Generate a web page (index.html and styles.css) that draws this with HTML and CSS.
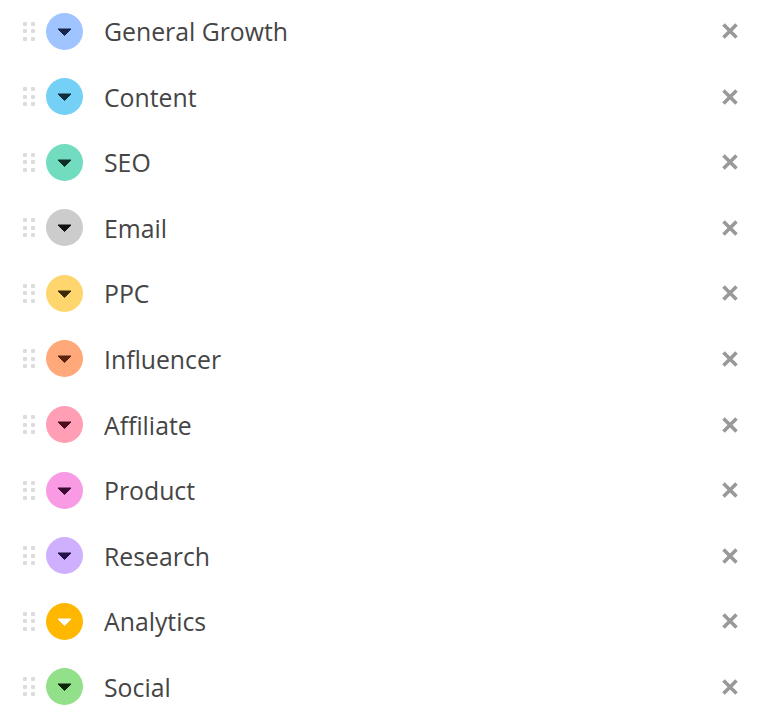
FILE: index.html
```html
<!DOCTYPE html>
<html>
<head>
<meta charset="utf-8">
<link rel="stylesheet" href="styles.css">
</head>
<body>
<ul class="list">
  <li class="row"><span class="grip"><i></i><i></i><i></i><i></i><i></i><i></i></span><span class="dot c-growth"><svg viewBox="0 0 15 8"><path d="M1 1 H14 L7.5 7.5 Z"/></svg></span><span class="label">General Growth</span><span class="remove"><svg viewBox="0 0 18 18"><path d="M2.5 2.5 L15.5 15.5 M15.5 2.5 L2.5 15.5"/></svg></span></li>
  <li class="row"><span class="grip"><i></i><i></i><i></i><i></i><i></i><i></i></span><span class="dot c-content"><svg viewBox="0 0 15 8"><path d="M1 1 H14 L7.5 7.5 Z"/></svg></span><span class="label">Content</span><span class="remove"><svg viewBox="0 0 18 18"><path d="M2.5 2.5 L15.5 15.5 M15.5 2.5 L2.5 15.5"/></svg></span></li>
  <li class="row"><span class="grip"><i></i><i></i><i></i><i></i><i></i><i></i></span><span class="dot c-seo"><svg viewBox="0 0 15 8"><path d="M1 1 H14 L7.5 7.5 Z"/></svg></span><span class="label">SEO</span><span class="remove"><svg viewBox="0 0 18 18"><path d="M2.5 2.5 L15.5 15.5 M15.5 2.5 L2.5 15.5"/></svg></span></li>
  <li class="row"><span class="grip"><i></i><i></i><i></i><i></i><i></i><i></i></span><span class="dot c-email"><svg viewBox="0 0 15 8"><path d="M1 1 H14 L7.5 7.5 Z"/></svg></span><span class="label">Email</span><span class="remove"><svg viewBox="0 0 18 18"><path d="M2.5 2.5 L15.5 15.5 M15.5 2.5 L2.5 15.5"/></svg></span></li>
  <li class="row"><span class="grip"><i></i><i></i><i></i><i></i><i></i><i></i></span><span class="dot c-ppc"><svg viewBox="0 0 15 8"><path d="M1 1 H14 L7.5 7.5 Z"/></svg></span><span class="label">PPC</span><span class="remove"><svg viewBox="0 0 18 18"><path d="M2.5 2.5 L15.5 15.5 M15.5 2.5 L2.5 15.5"/></svg></span></li>
  <li class="row"><span class="grip"><i></i><i></i><i></i><i></i><i></i><i></i></span><span class="dot c-influencer"><svg viewBox="0 0 15 8"><path d="M1 1 H14 L7.5 7.5 Z"/></svg></span><span class="label">Influencer</span><span class="remove"><svg viewBox="0 0 18 18"><path d="M2.5 2.5 L15.5 15.5 M15.5 2.5 L2.5 15.5"/></svg></span></li>
  <li class="row"><span class="grip"><i></i><i></i><i></i><i></i><i></i><i></i></span><span class="dot c-affiliate"><svg viewBox="0 0 15 8"><path d="M1 1 H14 L7.5 7.5 Z"/></svg></span><span class="label">Affiliate</span><span class="remove"><svg viewBox="0 0 18 18"><path d="M2.5 2.5 L15.5 15.5 M15.5 2.5 L2.5 15.5"/></svg></span></li>
  <li class="row"><span class="grip"><i></i><i></i><i></i><i></i><i></i><i></i></span><span class="dot c-product"><svg viewBox="0 0 15 8"><path d="M1 1 H14 L7.5 7.5 Z"/></svg></span><span class="label">Product</span><span class="remove"><svg viewBox="0 0 18 18"><path d="M2.5 2.5 L15.5 15.5 M15.5 2.5 L2.5 15.5"/></svg></span></li>
  <li class="row"><span class="grip"><i></i><i></i><i></i><i></i><i></i><i></i></span><span class="dot c-research"><svg viewBox="0 0 15 8"><path d="M1 1 H14 L7.5 7.5 Z"/></svg></span><span class="label">Research</span><span class="remove"><svg viewBox="0 0 18 18"><path d="M2.5 2.5 L15.5 15.5 M15.5 2.5 L2.5 15.5"/></svg></span></li>
  <li class="row"><span class="grip"><i></i><i></i><i></i><i></i><i></i><i></i></span><span class="dot c-analytics"><svg viewBox="0 0 15 8"><path d="M1 1 H14 L7.5 7.5 Z"/></svg></span><span class="label">Analytics</span><span class="remove"><svg viewBox="0 0 18 18"><path d="M2.5 2.5 L15.5 15.5 M15.5 2.5 L2.5 15.5"/></svg></span></li>
  <li class="row"><span class="grip"><i></i><i></i><i></i><i></i><i></i><i></i></span><span class="dot c-social"><svg viewBox="0 0 15 8"><path d="M1 1 H14 L7.5 7.5 Z"/></svg></span><span class="label">Social</span><span class="remove"><svg viewBox="0 0 18 18"><path d="M2.5 2.5 L15.5 15.5 M15.5 2.5 L2.5 15.5"/></svg></span></li>
</ul>
</body>
</html>
```
FILE: styles.css
```css
html, body {
  margin: 0;
  padding: 0;
  background: #ffffff;
  font-family: "Open Sans", "Noto Sans", sans-serif;
}
.list {
  list-style: none;
  margin: -1.8px 0 0 0;
  padding: 0 37px 0 23px;
}
.row {
  display: flex;
  align-items: center;
  height: 65.6px;
}
.grip {
  display: grid;
  grid-template-columns: 4px 4px;
  grid-auto-rows: 4px;
  column-gap: 4px;
  row-gap: 3.5px;
  width: 12px;
  margin-right: 11px;
}
.grip i {
  display: block;
  width: 4px;
  height: 4px;
  border-radius: 1px;
  background: #dcdcdc;
}
.dot {
  width: 37px;
  height: 37px;
  border-radius: 50%;
  display: flex;
  align-items: center;
  justify-content: center;
  flex: none;
}
.dot svg {
  width: 15px;
  height: 8px;
  margin-top: 1px;
}
.dot path {
  stroke-linejoin: round;
  stroke-width: 1;
}
.label {
  flex: 1;
  margin-left: 21px;
  font-size: 24.8px;
  color: #454545;
}
.remove {
  width: 18px;
  height: 18px;
  display: flex;
}
.remove svg {
  width: 18px;
  height: 18px;
}
.remove path {
  stroke: #999999;
  stroke-width: 3.6;
  fill: none;
}
.c-growth { background: #a0c4ff; }
.c-growth path { fill: #17244d; stroke: #17244d; }
.c-content { background: #74d0f5; }
.c-content path { fill: #0f2d3a; stroke: #0f2d3a; }
.c-seo { background: #72dcc0; }
.c-seo path { fill: #0e2e26; stroke: #0e2e26; }
.c-email { background: #cccccc; }
.c-email path { fill: #111111; stroke: #111111; }
.c-ppc { background: #ffd56e; }
.c-ppc path { fill: #3a2a05; stroke: #3a2a05; }
.c-influencer { background: #ffa97a; }
.c-influencer path { fill: #5a2210; stroke: #5a2210; }
.c-affiliate { background: #ff9eb5; }
.c-affiliate path { fill: #4a0d1f; stroke: #4a0d1f; }
.c-product { background: #f99be4; }
.c-product path { fill: #3a0a30; stroke: #3a0a30; }
.c-research { background: #cfb0ff; }
.c-research path { fill: #22124a; stroke: #22124a; }
.c-analytics { background: #ffb700; }
.c-analytics path { fill: #ffffff; stroke: #ffffff; }
.c-social { background: #93e08a; }
.c-social path { fill: #0c250a; stroke: #0c250a; }
```
